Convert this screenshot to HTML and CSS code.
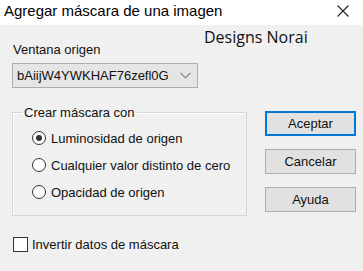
FILE: index.html
```html
<!DOCTYPE html>
<html>
<head>
    <meta name="viewport" content="width=device-width, initial-scale=1.0">
    <title>Agregar máscara de una imagen</title>
    <link rel="stylesheet" href="styles.css">
</head>
<body>
    <div class="titlebar">
        <span class="title">Agregar máscara de una imagen</span>
        <svg class="close" width="12" height="12" viewBox="0 0 12 12">
            <path d="M0.5 0.5 L11.5 11.5 M11.5 0.5 L0.5 11.5" stroke="#222" stroke-width="1.1" fill="none"/>
        </svg>
    </div>
    <div class="content">
        <span class="watermark">Designs Norai</span>
        <div class="main">
            <div class="left">
                <label class="label" for="ventana">Ventana origen</label>
                <div class="select" id="ventana">
                    <span>bAiijW4YWKHAF76zefl0G</span>
                    <svg width="11" height="7" viewBox="0 0 11 7">
                        <path d="M0.5 0.8 L5.5 5.8 L10.5 0.8" stroke="#7a7a7a" stroke-width="1.1" fill="none"/>
                    </svg>
                </div>
                <fieldset class="group">
                    <legend>Crear máscara con</legend>
                    <div class="radio checked"><span class="dot"></span>Luminosidad de origen</div>
                    <div class="radio"><span class="dot"></span>Cualquier valor distinto de cero</div>
                    <div class="radio"><span class="dot"></span>Opacidad de origen</div>
                </fieldset>
            </div>
            <div class="buttons">
                <button class="btn default">Aceptar</button>
                <button class="btn">Cancelar</button>
                <button class="btn">Ayuda</button>
            </div>
        </div>
        <div class="check"><span class="box"></span>Invertir datos de máscara</div>
    </div>
</body>
</html>
```

FILE: styles.css
```css
/* Dialogo estilo Windows */
body {
    margin: 0;
    padding: 0;
    width: 363px;
    height: 271px;
    background-color: #f0f0f0;
    font-family: "Liberation Sans", Arial, sans-serif;
    font-size: 13px;
    color: #111;
    overflow: hidden;
}
.titlebar {
    height: 25px;
    background-color: #fff;
    display: flex;
    align-items: center;
    justify-content: space-between;
    padding: 0 14px 0 4px;
}
.title {
    font-size: 15px;
    color: #000;
    margin-top: -4px;
}
.close {
    margin-top: -4px;
}
.content {
    position: relative;
    padding: 17px 0 0 12px;
}
.watermark {
    position: absolute;
    left: 204px;
    top: 1px;
    font-family: "Open Sans", sans-serif;
    font-size: 16px;
    color: #111;
}
.main {
    display: flex;
}
.left {
    width: 235px;
}
.label {
    display: block;
    margin-left: 1px;
    line-height: 15px;
}
.select {
    margin-top: 6px;
    width: 174px;
    height: 23px;
    border: 1px solid #adadad;
    background-color: #e5e5e5;
    display: flex;
    align-items: center;
    justify-content: space-between;
    padding: 0 6px 0 4px;
}
.group {
    box-sizing: border-box;
    margin: 17px 0 0 0;
    padding: 5px 0 0 19px;
    width: 235px;
    height: 111px;
    border: 1px solid #d6d6d6;
    box-shadow: inset 1px 1px 0 #fff;
}
.group legend {
    padding: 0 2px;
    margin-left: -10px;
}
.radio {
    display: flex;
    align-items: center;
    height: 28px;
    margin-top: -1px;
}
.dot {
    width: 12px;
    height: 12px;
    border: 1px solid #333;
    border-radius: 50%;
    background-color: #fff;
    margin-right: 5px;
    position: relative;
}
.checked .dot::after {
    content: "";
    position: absolute;
    left: 3px;
    top: 3px;
    width: 6px;
    height: 6px;
    border-radius: 50%;
    background-color: #333;
}
.buttons {
    display: flex;
    flex-direction: column;
    gap: 13px;
    margin-top: 69px;
    margin-left: 18px;
}
.btn {
    width: 91px;
    height: 25px;
    background-color: #e1e1e1;
    border: 1px solid #adadad;
    font-family: "Liberation Sans", Arial, sans-serif;
    font-size: 13px;
    color: #111;
    padding: 0;
}
.btn.default {
    border: 2px solid #0078d7;
}
.check {
    display: flex;
    align-items: center;
    margin-top: 21px;
    margin-left: 1px;
}
.box {
    width: 13px;
    height: 13px;
    border: 1px solid #333;
    background-color: #fff;
    margin-right: 4px;
}
```
